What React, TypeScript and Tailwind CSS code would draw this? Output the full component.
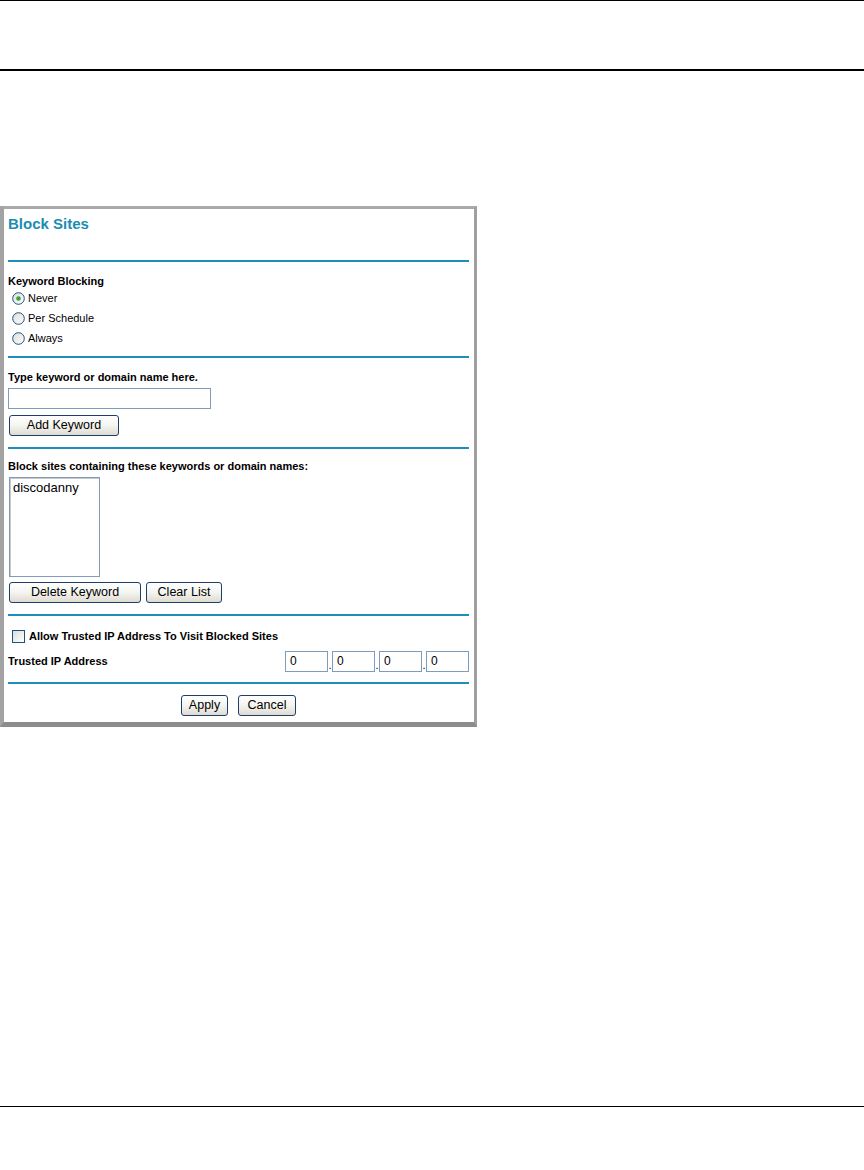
import React from "react";

function Radio({ checked }: { checked?: boolean }) {
  return (
    <svg width="13" height="13" viewBox="0 0 13 13" className="shrink-0">
      <defs>
        <linearGradient id="rg" x1="0" y1="0" x2="1" y2="1">
          <stop offset="0" stopColor="#dcdcd6" />
          <stop offset="1" stopColor="#ffffff" />
        </linearGradient>
      </defs>
      <circle cx="6.5" cy="6.5" r="5.8" fill="url(#rg)" stroke="#1c5180" strokeWidth="1" />
      {checked && <circle cx="6.5" cy="6.5" r="2.3" fill="#3aa43a" />}
    </svg>
  );
}

function XpButton({ label, w }: { label: string; w: string }) {
  return (
    <button
      className={`${w} h-[21px] rounded-[3px] border border-[#1c3f6e] bg-gradient-to-b from-white via-[#f4f4f0] to-[#dedbd0] text-[12.5px] text-black leading-none`}
    >
      {label}
    </button>
  );
}

function Rule() {
  return <div className="h-[2px] bg-[#1b8fbb]" />;
}

export default function App() {
  return (
    <div className="w-[864px] h-[1170px] bg-white font-['Liberation_Sans',Arial,sans-serif] text-black">
      <div className="h-px bg-black" />
      <div className="h-[68px]" />
      <div className="h-[1.5px] bg-black" />
      <div className="h-[135px]" />

      {/* screenshot frame */}
      <div className="w-[477px] border-t-[3px] border-l-[4px] border-r-[3px] border-b-[5px] border-t-[#a9a9a9] border-l-[#a3a3a3] border-r-[#a0a0a0] border-b-[#8c8c8c] bg-white">
        <div className="pl-[4px] pr-[5px]">
          <div className="h-[51px] pt-[6px]">
            <h1 className="text-[15px] leading-[18px] font-bold text-[#1a8db3]">Block Sites</h1>
          </div>
          <Rule />

          <div className="pt-[12px] pb-[7px]">
            <div className="text-[11px] leading-[14px] font-bold">Keyword Blocking</div>
            <div className="mt-px flex flex-col pl-[4px]">
              {[
                { label: "Never", checked: true },
                { label: "Per Schedule" },
                { label: "Always" },
              ].map((r) => (
                <div key={r.label} className="h-[20px] flex items-center gap-[3px] text-[11px]">
                  <Radio checked={r.checked} />
                  <span>{r.label}</span>
                </div>
              ))}
            </div>
          </div>
          <Rule />

          <div className="pt-[12px] pb-[11px]">
            <div className="text-[11px] leading-[14px] font-bold">Type keyword or domain name here.</div>
            <div className="mt-[4px] w-[203px] h-[21px] border border-[#7f9db9] bg-white" />
            <div className="mt-[6px] pl-px flex">
              <XpButton label="Add Keyword" w="w-[110px]" />
            </div>
          </div>
          <Rule />

          <div className="pt-[10px] pb-[11px]">
            <div className="text-[11px] leading-[14px] font-bold">Block sites containing these keywords or domain names:</div>
            <div className="mt-[4px] ml-px w-[91px] h-[100px] border border-[#7f9db9] shadow-[inset_1px_1px_0_#c8c8c8] bg-white px-[3px] pt-[2px] text-[13px] leading-[16px]">
              discodanny
            </div>
            <div className="mt-[5px] pl-px flex gap-[5px]">
              <XpButton label="Delete Keyword" w="w-[132px]" />
              <XpButton label="Clear List" w="w-[76px]" />
            </div>
          </div>
          <Rule />

          <div className="pt-[11px] pb-[10px]">
            <div className="h-[20px] flex items-center gap-[4px] pl-[4px] text-[11px] font-bold">
              <span className="w-[13px] h-[13px] border border-[#1c5180] bg-gradient-to-br from-[#dcdcd6] to-white shrink-0" />
              <span>Allow Trusted IP Address To Visit Blocked Sites</span>
            </div>
            <div className="mt-[4px] h-[21px] flex items-center justify-between">
              <span className="text-[11px] font-bold">Trusted IP Address</span>
              <div className="flex items-end">
                {[0, 1, 2, 3].map((i) => (
                  <React.Fragment key={i}>
                    {i > 0 && <span className="w-[4px] text-[11px] leading-[14px] text-center">.</span>}
                    <div className="w-[43px] h-[21px] border border-[#7f9db9] bg-white pl-[4px] text-[12px] leading-[19px]">
                      0
                    </div>
                  </React.Fragment>
                ))}
              </div>
            </div>
          </div>
          <Rule />

          <div className="pt-[11px] pb-[6px] flex justify-center gap-[10px]">
            <XpButton label="Apply" w="w-[47px]" />
            <XpButton label="Cancel" w="w-[58px]" />
          </div>
        </div>
      </div>

      <div className="h-[379px]" />
      <div className="h-px bg-black" />
    </div>
  );
}
